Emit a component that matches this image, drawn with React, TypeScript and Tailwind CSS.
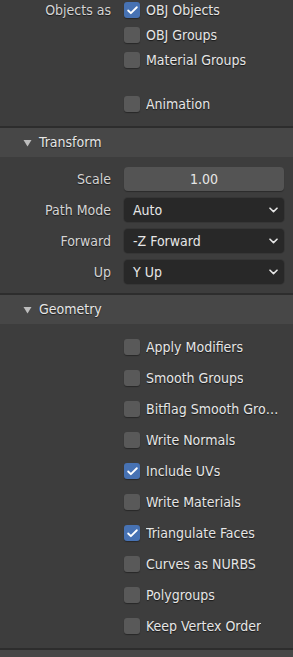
import { Check } from 'lucide-react';

const font = { fontFamily: '"DejaVu Sans Condensed", "DejaVu Sans", sans-serif' };

const textShadow = '[text-shadow:0_1px_1px_rgba(0,0,0,0.6)]';

function Checkbox({ label, checked = false }: { label: string; checked?: boolean }) {
  return (
    <div className="flex h-[24px] min-w-0 items-center gap-[6px]">
      <div
        className={`flex h-[16px] w-[16px] shrink-0 items-center justify-center rounded-[3px] shadow-[0_1px_1px_rgba(0,0,0,0.35)] ${
          checked ? 'bg-[#4772b3]' : 'bg-[#595959]'
        }`}
      >
        {checked && <Check size={13} strokeWidth={3.4} className="text-white" />}
      </div>
      <span className={`min-w-0 truncate text-[14px] text-[#e6e6e6] ${textShadow}`}>{label}</span>
    </div>
  );
}

function Header({ title }: { title: string }) {
  return (
    <div className="border-t-2 border-[#2d2d2d] bg-[#474747]">
      <div className="flex h-[29px] items-center pl-[23px]">
        <svg width="9" height="8" viewBox="0 0 9 8" className="mr-[7px]">
          <path d="M0.5 1 L8.5 1 L4.5 7.5 Z" fill="#bdbdbd" />
        </svg>
        <span className={`text-[14px] text-[#e6e6e6] ${textShadow}`}>{title}</span>
      </div>
    </div>
  );
}

function Row({ label, children }: { label?: string; children: React.ReactNode }) {
  return (
    <div className="grid grid-cols-[111px_minmax(0,1fr)] items-center gap-[13px] pr-[9px]">
      <span className={`text-right text-[14px] text-[#d4d4d4] ${textShadow}`}>{label}</span>
      {children}
    </div>
  );
}

function Dropdown({ value }: { value: string }) {
  return (
    <div className="flex h-[24px] items-center justify-between rounded-[4px] bg-[#282828] pl-[9px] pr-[5px] shadow-[0_0_0_1px_#363636]">
      <span className="text-[14px] text-[#e6e6e6]">{value}</span>
      <svg width="9" height="6" viewBox="0 0 9 6" className="mr-[1px]">
        <path d="M1 1.2 L4.5 4.6 L8 1.2" fill="none" stroke="#e6e6e6" strokeWidth="1.6" strokeLinecap="round" strokeLinejoin="round" />
      </svg>
    </div>
  );
}

const geometry: [string, boolean][] = [
  ['Apply Modifiers', false],
  ['Smooth Groups', false],
  ['Bitflag Smooth Groups', false],
  ['Write Normals', false],
  ['Include UVs', true],
  ['Write Materials', false],
  ['Triangulate Faces', true],
  ['Curves as NURBS', false],
  ['Polygroups', false],
  ['Keep Vertex Order', false],
];

export default function App() {
  return (
    <div className="h-[657px] w-[293px] overflow-hidden bg-[#3d3d3d]" style={font}>
      <div className="-mt-[2px] flex flex-col gap-[1px] pb-[10px]">
        <Row label="Objects as">
          <Checkbox label="OBJ Objects" checked />
        </Row>
        <Row>
          <Checkbox label="OBJ Groups" />
        </Row>
        <Row>
          <Checkbox label="Material Groups" />
        </Row>
        <div className="h-[18px]" />
        <Row>
          <Checkbox label="Animation" />
        </Row>
      </div>

      <Header title="Transform" />
      <div className="flex flex-col gap-[7px] pb-[9px] pt-[10px]">
        <Row label="Scale">
          <div className="flex h-[24px] items-center justify-center rounded-[4px] bg-[#545454] shadow-[0_1px_1px_rgba(0,0,0,0.3)]">
            <span className="text-[14px] text-[#e6e6e6]">1.00</span>
          </div>
        </Row>
        <Row label="Path Mode">
          <Dropdown value="Auto" />
        </Row>
        <Row label="Forward">
          <Dropdown value="-Z Forward" />
        </Row>
        <Row label="Up">
          <Dropdown value="Y Up" />
        </Row>
      </div>

      <Header title="Geometry" />
      <div className="flex flex-col gap-[7px] pb-[10px] pt-[11px]">
        {geometry.map(([label, checked]) => (
          <Row key={label}>
            <Checkbox label={label} checked={checked} />
          </Row>
        ))}
      </div>
      <Header title="" />
    </div>
  );
}
